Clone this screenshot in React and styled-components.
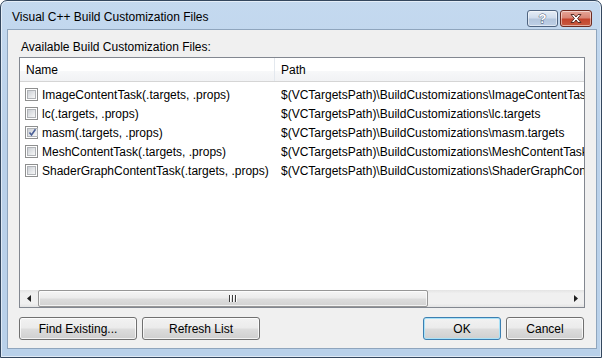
import React, { useState } from 'react';
import styled, { createGlobalStyle } from 'styled-components';

const GlobalStyle = createGlobalStyle`
  html, body {
    margin: 0;
    padding: 0;
    background: #ffffff;
  }
  body {
    font-family: 'Liberation Sans', Arial, sans-serif;
    font-size: 12px;
    color: #000;
  }
`;

const Window = styled.div`
  box-sizing: border-box;
  width: 602px;
  height: 358px;
  display: flex;
  flex-direction: column;
  border: 1px solid #34475e;
  border-radius: 7px 7px 0 0;
  background: linear-gradient(180deg, #c4d9ef 0%, #bad1ea 40%, #b9d1ea 100%);
  box-shadow: inset 0 0 0 1px rgba(255, 255, 255, 0.55);
  overflow: hidden;
`;

const TitleBar = styled.div`
  height: 28px;
  display: flex;
  align-items: center;
  padding-left: 11px;
`;

const Title = styled.span`
  font-size: 12px;
  color: #000;
  margin-top: 3px;
`;

const CaptionButtons = styled.div`
  margin-left: auto;
  margin-right: 9px;
  align-self: flex-start;
  margin-top: 9px;
  display: flex;
  gap: 2px;
`;

const CaptionButton = styled.div`
  box-sizing: border-box;
  width: ${(p) => (p.$wide ? 32 : 31)}px;
  height: 17px;
  border: 1px solid ${(p) => (p.$danger ? '#6d2a20' : '#4f6480')};
  border-radius: 3px;
  display: flex;
  align-items: center;
  justify-content: center;
  background: ${(p) =>
    p.$danger
      ? 'linear-gradient(180deg, #e6a598 0%, #d98676 45%, #c4442d 55%, #c85a40 100%)'
      : 'linear-gradient(180deg, #e5edf6 0%, #cfdced 45%, #b3c6dd 55%, #bed0e6 100%)'};
  box-shadow: inset 0 0 0 1px rgba(255, 255, 255, 0.5);
`;

const HelpGlyph = styled.span`
  font-family: 'Liberation Sans', Arial, sans-serif;
  font-weight: bold;
  font-size: 13px;
  line-height: 13px;
  color: #ffffff;
  -webkit-text-stroke: 0.8px #3d4d63;
  paint-order: stroke fill;
`;

const Client = styled.div`
  flex: 1;
  margin: 0 4px 8px 6px;
  border: 1px solid #8fa5bd;
  background: #f0f0f0;
  display: flex;
  flex-direction: column;
  padding: 10px 11px 8px 11px;
`;

const Caption = styled.div`
  height: 15px;
  line-height: 15px;
  padding-left: 2px;
  margin-bottom: 2px;
`;

const ListBox = styled.div`
  box-sizing: border-box;
  height: 251px;
  border: 1px solid #828790;
  background: #ffffff;
  display: flex;
  flex-direction: column;
  overflow: hidden;
`;

const HeaderRow = styled.div`
  height: 23px;
  display: flex;
  border-bottom: 1px solid #d5d5d5;
  background: linear-gradient(180deg, #ffffff 0%, #ffffff 55%, #f7f8f9 56%, #f1f2f4 100%);
`;

const HeaderCell = styled.div`
  box-sizing: border-box;
  width: ${(p) => (p.$width ? `${p.$width}px` : 'auto')};
  flex: ${(p) => (p.$width ? 'none' : '1')};
  display: flex;
  align-items: center;
  padding-left: ${(p) => p.$pad}px;
  border-right: ${(p) => (p.$width ? '1px solid #e3e8ee' : 'none')};
`;

const Body = styled.div`
  height: 208px;
  padding-top: 3px;
  box-sizing: border-box;
  overflow: hidden;
`;

const Row = styled.div`
  height: 19px;
  display: flex;
  align-items: center;
  white-space: nowrap;
`;

const NameCell = styled.label`
  box-sizing: border-box;
  width: 255px;
  flex: none;
  display: flex;
  align-items: center;
  gap: 4px;
  padding-left: 5px;
  cursor: default;
`;

const PathCell = styled.div`
  flex: none;
  padding-left: 6px;
`;

const Box = styled.span`
  box-sizing: border-box;
  width: 13px;
  height: 13px;
  flex: none;
  border: 1px solid #8e8f8f;
  background: #ffffff;
  padding: 1px;
  display: flex;
`;

const BoxInner = styled.span`
  flex: 1;
  display: flex;
  align-items: center;
  justify-content: center;
  border: 1px solid #b0b3b7;
  background: linear-gradient(135deg, #cbcfd5 0%, #e6e8ea 60%, #f7f7f7 100%);
`;

const ScrollBar = styled.div`
  height: 17px;
  flex: none;
  display: flex;
  align-items: stretch;
  background: linear-gradient(180deg, #e4e4e4 0%, #f0f0f0 20%, #f0f0f0 80%, #e4e4e4 100%);
`;

const Arrow = styled.div`
  width: 17px;
  flex: none;
  display: flex;
  align-items: center;
  justify-content: center;
`;

const Track = styled.div`
  flex: 1;
  display: flex;
  align-items: stretch;
  padding: 0 1px;
`;

const Thumb = styled.div`
  box-sizing: border-box;
  width: ${(p) => p.$width}px;
  border: 1px solid #979797;
  border-radius: 2px;
  background: linear-gradient(180deg, #f5f5f5 0%, #ececec 45%, #dcdcdc 55%, #d2d2d2 100%);
  box-shadow: inset 0 0 0 1px rgba(255, 255, 255, 0.7);
  display: flex;
  align-items: center;
  justify-content: center;
`;

const Grip = styled.div`
  display: flex;
  gap: 1px;
`;

const GripLine = styled.span`
  width: 1px;
  height: 7px;
  background: #3d3d3d;
  box-shadow: 1px 0 0 #ffffff;
  margin-right: 1px;
`;

const Footer = styled.div`
  margin-top: 9px;
  display: flex;
  align-items: center;
  gap: 5px;
`;

const Spacer = styled.div`
  flex: 1;
`;

const Button = styled.button`
  box-sizing: border-box;
  width: ${(p) => p.$width}px;
  height: 23px;
  margin: 0;
  padding: 0;
  font-family: 'Liberation Sans', Arial, sans-serif;
  font-size: 12px;
  color: #000;
  border: 1px solid ${(p) => (p.$default ? '#3c7fb1' : '#707070')};
  border-radius: 3px;
  background: linear-gradient(180deg, #f2f2f2 0%, #ebebeb 48%, #dddddd 52%, #cfcfcf 100%);
  box-shadow: inset 0 0 0 1px ${(p) => (p.$default ? '#a9e2f8' : 'rgba(255, 255, 255, 0.75)')};
  margin-right: ${(p) => p.$gapRight || 0}px;
`;

const rows = [
  { name: 'ImageContentTask(.targets, .props)', path: '$(VCTargetsPath)\\BuildCustomizations\\ImageContentTask.targets', checked: false },
  { name: 'lc(.targets, .props)', path: '$(VCTargetsPath)\\BuildCustomizations\\lc.targets', checked: false },
  { name: 'masm(.targets, .props)', path: '$(VCTargetsPath)\\BuildCustomizations\\masm.targets', checked: true },
  { name: 'MeshContentTask(.targets, .props)', path: '$(VCTargetsPath)\\BuildCustomizations\\MeshContentTask.targets', checked: false },
  { name: 'ShaderGraphContentTask(.targets, .props)', path: '$(VCTargetsPath)\\BuildCustomizations\\ShaderGraphContentTask.targets', checked: false },
];

function CheckBox({ checked }) {
  return (
    <Box>
      <BoxInner>
        {checked && (
          <svg width="9" height="9" viewBox="0 0 9 9">
            <path d="M1.5 4.5 L3.5 7 L7.5 1.2" fill="none" stroke="#4a5f97" strokeWidth="1.6" />
          </svg>
        )}
      </BoxInner>
    </Box>
  );
}

export default function App() {
  const [items, setItems] = useState(rows);

  const toggle = (i) => {
    setItems(items.map((it, idx) => (idx === i ? { ...it, checked: !it.checked } : it)));
  };

  return (
    <>
      <GlobalStyle />
      <Window>
        <TitleBar>
          <Title>Visual C++ Build Customization Files</Title>
          <CaptionButtons>
            <CaptionButton>
              <HelpGlyph>?</HelpGlyph>
            </CaptionButton>
            <CaptionButton $danger $wide>
              <svg width="14" height="11" viewBox="0 0 14 11">
                <path
                  d="M2 1.5 L5 1.5 L7 4 L9 1.5 L12 1.5 L8.6 5.5 L12 9.5 L9 9.5 L7 7 L5 9.5 L2 9.5 L5.4 5.5 Z"
                  fill="#ffffff"
                  stroke="#4a1f18"
                  strokeWidth="0.9"
                  strokeLinejoin="round"
                />
              </svg>
            </CaptionButton>
          </CaptionButtons>
        </TitleBar>

        <Client>
          <Caption>Available Build Customization Files:</Caption>
          <ListBox>
            <HeaderRow>
              <HeaderCell $width={255} $pad={6}>Name</HeaderCell>
              <HeaderCell $pad={6}>Path</HeaderCell>
            </HeaderRow>
            <Body>
              {items.map((it, i) => (
                <Row key={it.name}>
                  <NameCell onClick={() => toggle(i)}>
                    <CheckBox checked={it.checked} />
                    {it.name}
                  </NameCell>
                  <PathCell>{it.path}</PathCell>
                </Row>
              ))}
            </Body>
            <ScrollBar>
              <Arrow>
                <svg width="4" height="7" viewBox="0 0 4 7">
                  <path d="M4 0 L0 3.5 L4 7 Z" fill="#1f1f1f" />
                </svg>
              </Arrow>
              <Track>
                <Thumb $width={390}>
                  <Grip>
                    <GripLine />
                    <GripLine />
                    <GripLine />
                  </Grip>
                </Thumb>
              </Track>
              <Arrow>
                <svg width="4" height="7" viewBox="0 0 4 7">
                  <path d="M0 0 L4 3.5 L0 7 Z" fill="#1f1f1f" />
                </svg>
              </Arrow>
            </ScrollBar>
          </ListBox>
          <Footer>
            <Button $width={118}>Find Existing...</Button>
            <Button $width={118}>Refresh List</Button>
            <Spacer />
            <Button $width={78} $default>OK</Button>
            <Button $width={78} $gapRight={1}>Cancel</Button>
          </Footer>
        </Client>
      </Window>
    </>
  );
}
